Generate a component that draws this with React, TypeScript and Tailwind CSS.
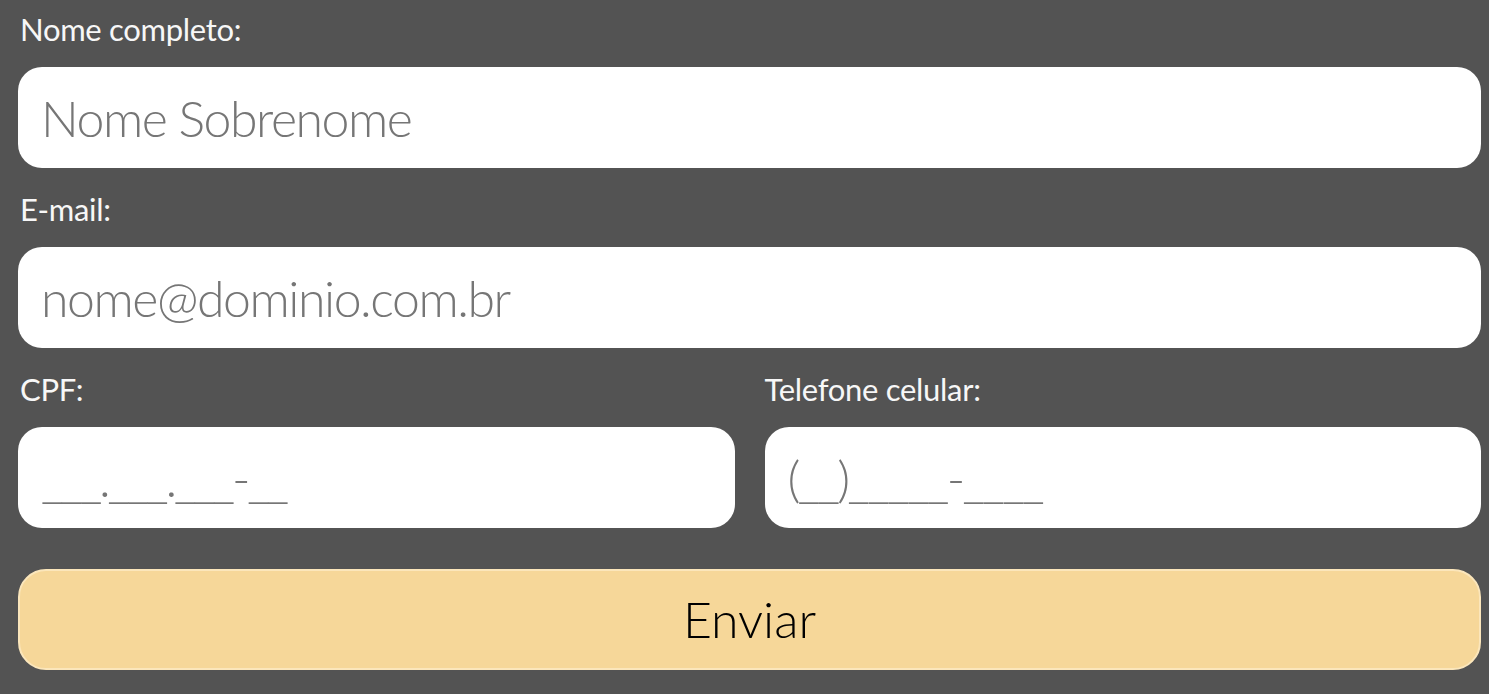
import { useState } from "react";

const inputCls =
  "block w-full h-[101px] rounded-[24px] bg-white pl-[23px] pr-4 text-[50px] font-light text-[#333] placeholder:text-[#767676] outline-none border-0";

const labelCls = "block h-[36px] leading-[36px] text-[31px] tracking-[-0.3px] text-[#f7f7f7] mb-[20px]";

const App = () => {
  const [nome, setNome] = useState("");
  const [email, setEmail] = useState("");
  const [cpf, setCpf] = useState("");
  const [tel, setTel] = useState("");

  return (
    <div className="min-h-screen bg-[#535353] pl-[18px] pr-[8px] pt-[11px] font-['Lato',sans-serif]">
      <form onSubmit={(e) => e.preventDefault()}>
        <div className="mb-[23px]">
          <label className={labelCls + " pl-[2px]"}>Nome completo:</label>
          <input className={inputCls + " tracking-[-1.45px]"} placeholder="Nome Sobrenome" value={nome} onChange={(e) => setNome(e.target.value)} />
        </div>
        <div className="mb-[23px]">
          <label className={labelCls + " pl-[2px]"}>E-mail:</label>
          <input className={inputCls + " tracking-[-1.45px]"} placeholder="nome@dominio.com.br" value={email} onChange={(e) => setEmail(e.target.value)} />
        </div>
        <div className="grid grid-cols-2 gap-[30px] mb-[41px]">
          <div>
            <label className={labelCls + " pl-[2px]"}>CPF:</label>
            <input className={inputCls + " tracking-[-3.2px]"} placeholder="___.___.___-__" value={cpf} onChange={(e) => setCpf(e.target.value)} />
          </div>
          <div>
            <label className={labelCls}>Telefone celular:</label>
            <input className={inputCls + " tracking-[-2.7px]"} placeholder="(__)_____-____" value={tel} onChange={(e) => setTel(e.target.value)} />
          </div>
        </div>
        <button
          type="submit"
          className="block w-full h-[101px] rounded-[28px] bg-[#f6d799] border-2 border-[#fbe6bb] text-[50px] font-light text-black"
        >
          Enviar
        </button>
      </form>
    </div>
  );
};

export default App;
